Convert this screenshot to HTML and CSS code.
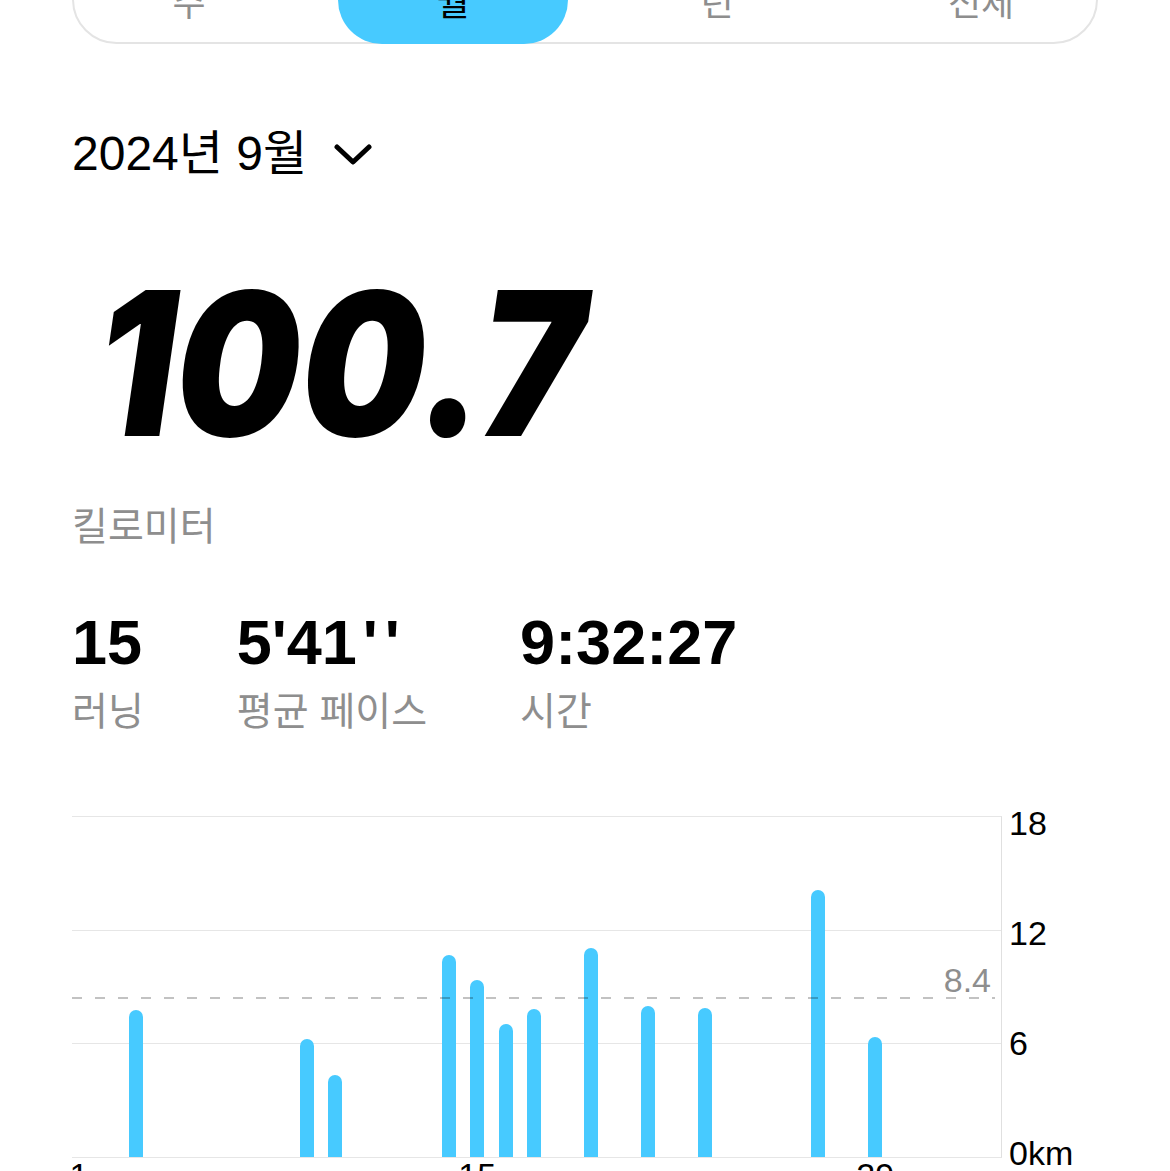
FILE: index.html
```html
<!DOCTYPE html>
<html lang="ko">
<head>
    <meta charset="UTF-8">
    <meta name="viewport" content="width=device-width, initial-scale=1.0">
    <title>러닝 기록</title>
    <link rel="stylesheet" href="styles.css">
</head>
<body>

<div class="page">
    <div class="tabs">
        <div class="tab">주</div>
        <div class="tab active">월</div>
        <div class="tab">년</div>
        <div class="tab">전체</div>
    </div>

    <div class="period">
        <span>2024년 9월</span>
        <svg class="chevron" width="38" height="24" viewBox="0 0 38 24">
            <path d="M3 4 L19 19 L35 4" fill="none" stroke="#000" stroke-width="5" stroke-linecap="round" stroke-linejoin="round"/>
        </svg>
    </div>

    <div class="distance">100.7</div>
    <div class="unit">킬로미터</div>

    <div class="stats">
        <div class="stat">
            <div class="stat-value">15</div>
            <div class="stat-label">러닝</div>
        </div>
        <div class="stat">
            <div class="stat-value">5'41<span class="seconds">''</span></div>
            <div class="stat-label">평균 페이스</div>
        </div>
        <div class="stat">
            <div class="stat-value">9:32:27</div>
            <div class="stat-label">시간</div>
        </div>
    </div>

    <div class="chart">
        <div class="plot">
            <div class="bars">
                <div class="slot"></div>
                <div class="slot"></div>
                <div class="slot"><div class="bar" style="height: 147px"></div></div>
                <div class="slot"></div>
                <div class="slot"></div>
                <div class="slot"></div>
                <div class="slot"></div>
                <div class="slot"></div>
                <div class="slot"><div class="bar" style="height: 118px"></div></div>
                <div class="slot"><div class="bar" style="height: 82px"></div></div>
                <div class="slot"></div>
                <div class="slot"></div>
                <div class="slot"></div>
                <div class="slot"><div class="bar" style="height: 202px"></div></div>
                <div class="slot"><div class="bar" style="height: 177px"></div></div>
                <div class="slot"><div class="bar" style="height: 133px"></div></div>
                <div class="slot"><div class="bar" style="height: 148px"></div></div>
                <div class="slot"></div>
                <div class="slot"><div class="bar" style="height: 209px"></div></div>
                <div class="slot"></div>
                <div class="slot"><div class="bar" style="height: 151px"></div></div>
                <div class="slot"></div>
                <div class="slot"><div class="bar" style="height: 149px"></div></div>
                <div class="slot"></div>
                <div class="slot"></div>
                <div class="slot"></div>
                <div class="slot"><div class="bar" style="height: 267px"></div></div>
                <div class="slot"></div>
                <div class="slot"><div class="bar" style="height: 120px"></div></div>
                <div class="slot"></div>
            </div>
            <div class="average">
                <span>8.4</span>
            </div>
        </div>
        <div class="y-axis">
            <span>18</span>
            <span>12</span>
            <span>6</span>
            <span>0km</span>
        </div>
    </div>

    <div class="x-axis">
        <span class="day-1">1</span>
        <span class="day-15">15</span>
        <span class="day-29">29</span>
    </div>
</div>

</body>
</html>
```

FILE: styles.css
```css
body {
    margin: 0;
    background-color: #fff;
    color: #000;
    font-family: "Liberation Sans", "Noto Sans CJK KR", sans-serif;
    overflow: hidden;
}

.page {
    padding: 0 72px;
}

/* period tabs */
.tabs {
    display: grid;
    grid-template-columns: repeat(4, 1fr);
    column-gap: 34px;
    margin-top: -45px;
    border: 2px solid #e4e4e4;
    border-radius: 46px;
}

.tab {
    height: 85px;
    display: flex;
    align-items: center;
    justify-content: center;
    font-family: "Noto Sans CJK KR", sans-serif;
    font-size: 36px;
    color: #8e8e8e;
}

.tab.active {
    margin: -2px 0 -2px;
    height: 89px;
    background-color: #47caff;
    border-radius: 44px;
    color: #000;
}

/* month selector */
.period {
    display: flex;
    align-items: center;
    gap: 27px;
    margin-top: 82px;
    font-size: 48px;
    line-height: 56px;
}

.chevron {
    margin-top: 2px;
}

/* big distance */
.distance {
    margin-top: 81px;
    margin-left: 24px;
    font-family: Inter, sans-serif;
    font-weight: 900;
    font-style: italic;
    font-size: 200px;
    line-height: 200px;
    transform: scaleX(0.88);
    transform-origin: left center;
}

.unit {
    margin-top: 36px;
    font-family: "Noto Sans CJK KR", sans-serif;
    font-size: 39px;
    line-height: 48px;
    color: #8e8e8e;
}

/* summary stats */
.stats {
    display: flex;
    gap: 93px;
    margin-top: 64px;
}

.stat {
    display: flex;
    flex-direction: column;
}

.stat-value {
    font-weight: bold;
    font-size: 63px;
    line-height: 63px;
}

.seconds {
    margin-left: 6px;
    letter-spacing: 7px;
}

.stat-label {
    margin-top: 11px;
    font-family: "Noto Sans CJK KR", sans-serif;
    font-size: 39px;
    line-height: 46px;
    color: #8e8e8e;
}

/* monthly chart */
.chart {
    display: flex;
    margin-top: 85px;
}

.plot {
    position: relative;
    width: 929px;
    height: 340px;
    border-top: 1px solid #e6e6e6;
    border-bottom: 1px solid #e6e6e6;
    border-right: 1px solid #e0e0e0;
    background: linear-gradient(to bottom,
        transparent 113px, #e6e6e6 113px, #e6e6e6 114px,
        transparent 114px, transparent 226px, #e6e6e6 226px, #e6e6e6 227px,
        transparent 227px);
}

.bars {
    display: grid;
    grid-template-columns: repeat(30, 28.45px);
    align-items: end;
    height: 100%;
}

.slot {
    height: 100%;
    display: flex;
    align-items: flex-end;
}

.bar {
    width: 14px;
    background-color: #47caff;
    border-radius: 7px 7px 0 0;
}

.average {
    position: absolute;
    left: 0;
    right: 6px;
    bottom: 158px;
    height: 2px;
    background: repeating-linear-gradient(to right,
        rgba(0, 0, 0, 0.24) 0, rgba(0, 0, 0, 0.24) 10px,
        transparent 10px, transparent 23px);
}

.average span {
    position: absolute;
    right: 4px;
    bottom: 2px;
    font-size: 34px;
    line-height: 34px;
    color: #8e8e8e;
}

.y-axis {
    display: flex;
    flex-direction: column;
    justify-content: space-between;
    height: 364px;
    margin: -10px 0 -12px;
    padding-left: 7px;
    font-size: 34px;
    line-height: 34px;
}

.x-axis {
    display: grid;
    grid-template-columns: repeat(30, 28.45px);
    font-size: 34px;
    line-height: 34px;
}

.x-axis span {
    width: 14px;
    display: flex;
    justify-content: center;
}

.day-1 {
    grid-column: 1;
}

.day-15 {
    grid-column: 15;
}

.day-29 {
    grid-column: 29;
}
```
